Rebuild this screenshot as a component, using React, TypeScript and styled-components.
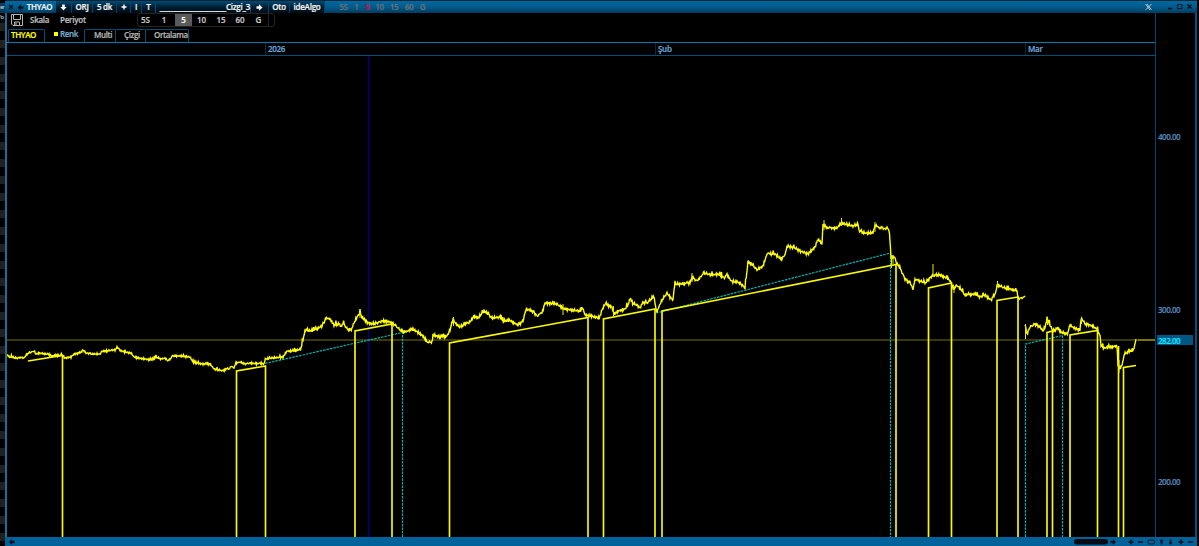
import React from 'react';
import styled, { createGlobalStyle } from 'styled-components';

const Global = createGlobalStyle`
  * { box-sizing: border-box; }
  html, body { margin: 0; background: #000; overflow: hidden; }
  body { font: 600 8px/1 "Open Sans", "Noto Sans", sans-serif; letter-spacing: -.25px; color: #c4c4c4; -webkit-text-stroke: .2px; }
`;
const Desktop = styled.div`display: flex; width: 1199px; height: 546px; background: #000; overflow: hidden;`;
const Behind = styled.aside`
  flex: 0 0 5px; white-space: nowrap; color: #a8b4bc; padding-top: 3px;
  background: repeating-linear-gradient(#000 0 6px, #202020 6px 14px, #000 14px 17px);
`;
const BehindText = styled.div<{ $bg: string }>`
  height: 10px; font-size: 5.6px; font-weight: 600; letter-spacing: -.9px; line-height: 9px; background: ${p => p.$bg};
`;
const Frame = styled.main`
  width: 1192px; display: flex; flex-direction: column; border-top: 1px solid #062638;
`;
const TitleBar = styled.header`
  height: 12px; display: flex; align-items: center; color: #f4f4f4;
  background: linear-gradient(#00699f, #00598a 55%, #003c5e);
`;
const Cell = styled.span<{ $w: number; $dark?: boolean; $tone?: string; $end?: boolean }>`
  width: ${p => p.$w}px; height: 12px; flex: none; display: flex; align-items: center;
  justify-content: ${p => (p.$end ? 'flex-end' : 'center')}; white-space: nowrap;
  color: ${p => p.$tone ?? 'inherit'};
  ${p => p.$dark && 'background: linear-gradient(#004a75, #001c2e 55%, #000c15); border-right: 1px solid #00466f;'}
`;
const Spacer = styled.span<{ $w?: number }>`${p => (p.$w === undefined ? 'flex: 1;' : `flex: 0 0 ${p.$w}px;`)}`;
const Body = styled.div`
  flex: 1; display: flex; min-height: 0; border-left: 2px solid #216c98; border-right: 2px solid #00507c;
`;
const Main = styled.section`width: 1149px; border-right: 1px solid #00466c; display: flex; flex-direction: column;`;
const Toolbar = styled.div`height: 15px; display: flex; align-items: center; padding: 0 0 1px 4px;`;
const MenuItem = styled.span<{ $w: number }>`width: ${p => p.$w}px; color: #bdbdbd;`;
const Periods = styled.div`
  width: 138px; height: 14px; display: flex; align-items: stretch; border: 1px solid #242424; border-radius: 3px;
`;
const Period = styled.span<{ $w: number; $on?: boolean }>`
  flex: 0 0 ${p => p.$w}px; display: flex; align-items: center; justify-content: center; color: ${p => (p.$on ? '#fff' : '#c8c8c8')};
  background: ${p => (p.$on ? '#5b5b5b' : 'transparent')}; letter-spacing: 0;
`;
const PeriodEnd = styled.i`flex: 1; border-left: 1px solid #242424;`;
const Tabs = styled.nav`height: 15px; display: flex; align-items: flex-end; border-bottom: 1px solid #007bb3; padding-left: 1px;`;
const Tab = styled.span<{ $w: number; $tone?: string; $pad: number; $plain?: boolean; $start?: boolean }>`
  width: ${p => p.$w}px; height: 13px; padding-left: ${p => p.$pad}px; display: flex; align-items: center; gap: 2px;
  color: ${p => p.$tone ?? '#b4b4b4'}; padding-bottom: ${p => (p.$plain ? 3 : 2)}px; letter-spacing: -.38px;
  ${p => !p.$plain && 'border-top: 1px solid #004f79; border-right: 1px solid #004f79; border-radius: 0 2px 0 0;'}
  ${p => p.$start && 'border-left: 1px solid #004f79; border-radius: 2px 2px 0 0;'}
`;
const Swatch = styled.i`width: 4px; height: 4px; background: #ff0;`;
const Dates = styled.div`height: 13px; display: flex; border-bottom: 1px solid #004f79; padding-left: 258px;`;
const DateLabel = styled.span<{ $w: number }>`
  width: ${p => p.$w}px; border-left: 1px solid #152633; padding-left: 2px; color: #6aa8da; line-height: 11px; letter-spacing: -.3px;
`;
const Chart = styled.svg`display: block; flex: 1; width: 1148px; min-height: 0;`;
const Axis = styled.aside`flex: 1; display: flex; flex-direction: column; color: #5286b6; padding-top: 118px;`;
const Price = styled.span<{ $gap: number; $on?: boolean }>`
  height: 10px; line-height: 11px; padding-left: 1px; margin: 0 2px ${p => p.$gap}px 1px; letter-spacing: -.48px;
  ${p => p.$on && 'background: #005786; color: #12e6ff;'}
`;
const Footer = styled.footer`height: 9px; background: #00629a; display: flex;`;
const FooterArt = styled.svg`display: block;`;

const Arrow = ({ dir = 'right', color = '#fff' }: { dir?: 'right' | 'left' | 'down'; color?: string }) => (
  <svg width="7" height="7" viewBox="0 0 7 7">
    <path d="M.5 2.200H3V.3L6.500 3.500 3 6.700V4.800H.5Z" fill={color}
      transform={dir === 'left' ? 'rotate(180 3.5 3.5)' : dir === 'down' ? 'rotate(90 3.5 3.5)' : undefined} />
  </svg>
);

type Series = number[];
const first: Series = [
  7,355,9,357,12,357,15,358,20,358,24,358,27,354,32,352,34,351,36,354,40,353,45,354,48,354,52,356,56,355,60,356,62,355,65,358,71,357,74,354,80,353,83,350,86,353,91,354,97,354,100,354,103,351,107,351,112,350,115,350,117,347,119,350,125,352,131,353,134,357,138,358,145,359,152,360,156,357,161,359,165,358,168,361,173,356,180,356,190,357,193,362,197,363,203,364,210,364,214,369,219,370,224,371,227,368,229,370,231,366,234,368,236,363,240,362,245,364,250,363,257,364,260,363,264,364,
  266,359,272,358,283,357,287,351,294,351,301,349,303,340,305,330,310,331,317,329,323,325,326,318,330,319,334,325,339,324,341,326,343,323,348,330,352,329,354,323,357,317,360,313,362,318,366,322,372,324,377,323,382,321,386,321,390,322,395,325,400,330,404,332,408,331,412,329,416,331,423,336,427,342,432,342,433,335,440,337,447,336,450,330,453,319,456,324,460,327,465,324,470,322,474,316,478,318,484,311,487,313,492,318,500,317,504,322,508,320,511,321,518,325,523,321,526,309,532,311,537,316,542,313,545,303,557,304,562,308,565,309,572,310,580,311,583,308,585,315,592,316,599,319,602,310,605,304,612,307,614,314,618,311,625,309,628,305,630,299,632,303,637,305,640,308,642,303,647,303,652,298,654,297,655,303,657,312,662,300,667,293,670,297,673,300,674,290,675,284,680,284,690,283,692,277,697,281,704,273,712,275,718,274,725,278,727,274,731,281,740,283,745,288,748,262,752,264,757,270,763,266,767,254,775,254,781,259,785,255,787,246,795,248,800,251,808,254,815,247,818,239,822,244,823,224,827,228,837,228,841,223,845,224,853,226,858,224,859,230,864,233,873,233,875,225,880,229,882,226,884,229,887,228,889,230,890,240,891,258,894,257,896,262,900,268,905,279,910,283,913,289,915,280,920,281,925,283,930,278,933,275,935,275,940,275,947,278,951,283,954,289,956,285,960,288,965,295,975,294,980,297,985,295,991,300,996,292,997,285,1000,286,1005,288,1010,289,1017,291,1018,298,1021,299,1025,296,
];
const second: Series = [1025,325,1027,334,1030,327,1035,324,1040,327,1043,331,1046,325,1047,318,1050,325,1053,331,1058,328,1062,333,1065,334,1068,333,1070,325,1074,328,1080,330,1081,319,1085,324,1090,325,1097,329,1100,336,1101,345,1104,348,1110,347,1117,346,1118,365,1120,370,1122,365,1124,355,1128,352,1134,349,1136,340];

const trace = (s: Series) => {
  let d = `M${s[0]} ${s[1]}`;
  for (let i = 2; i < s.length; i += 2) {
    const [x0, y0, x1, y1] = [s[i - 2], s[i - 1], s[i], s[i + 1]];
    const steps = Math.max(1, Math.round((x1 - x0) / 0.6));
    const amp = x1 < 300 ? 1 : 1.6;
    for (let k = 1; k <= steps; k++) {
      const t = k / steps;
      const x = x0 + (x1 - x0) * t;
      const n = (Math.sin(x * 17.99) + Math.sin(x * 4.71)) * 0.5;
      const spike = Math.sin(x * 7.3) > 0.985 ? -1.5 : 0;
      d += `L${x.toFixed(1)} ${(y0 + (y1 - y0) * t + n * amp + spike * amp).toFixed(1)}`;
    }
  }
  return d;
};
const spikes = 'M360 318V312M453.500 326V317M563 304V315M692 282V273M824 230V220M841.500 226V218M875 232V222M891.500 255V268M893 264V255M933 276V264M997.500 287V281M1025.500 324V339M1047.500 325V317M1081.500 324V317M954 286V293M1119 360V373M613.500 306V316';

const Plot = () => (
  <Chart viewBox="7 56 1148 481" preserveAspectRatio="none">
    <path d="M368.500 56V537" stroke="#00008c" strokeWidth="1.4" />
    <path d="M7 340H1155" stroke="#4c4c00" strokeWidth="1.6" />
    <path d="M1138 340H1155" stroke="#a29a00" strokeWidth="1.3" />
    <g fill="none" stroke="#00b4b4" strokeWidth="1.2" strokeDasharray="2.5 1">
      <path d="M265 363.500L402.500 332.500V537M656 313L664 311 890.500 253V537M1025.500 537V344L1062.500 335.500V537" />
    </g>
    <g fill="none" stroke="#fafa00" strokeWidth="1.65">
      <path d="M28 361L62.500 355.500V537M236.500 537V371L265.500 366V537M355 537V331L392 324V537M449.500 537V343L588 317.500V537M603.500 537V319L655 309V537M662 537V311L896 264.500V537M928.500 537V288L951.500 283V537M997 537V300.500L1018 297V537M1047 537V332.500L1052.500 331V537M1070 537V335L1097.500 330.500V537M1118.500 346V537M1123.500 537V367.500L1136 365.500" />
    </g>
    <path d={trace(first)} fill="none" stroke="#ff0" strokeWidth="1.4" />
    <path d={trace(second)} fill="none" stroke="#ff0" strokeWidth="1.4" />
    <path d={spikes} stroke="#e8e800" strokeWidth="1" />
  </Chart>
);

export default function App() {
  return (
    <>
      <Global />
      <Desktop>
        <Behind><BehindText $bg="#003c5e">er</BehindText><BehindText $bg="#000">'o</BehindText></Behind>
        <Frame>
          <TitleBar>
            <Cell $w={11}><svg width="6" height="6" viewBox="0 0 6 6"><path d="M1 1L5 5M5 1L1 5" stroke="#001725" strokeWidth="1.3" /></svg></Cell>
            <Cell $w={9}><Arrow dir="left" color="#001725" /></Cell>
            <Cell $w={29}>THYAO</Cell>
            <Spacer $w={2} />
            <Cell $w={16} $dark><Arrow dir="down" /></Cell>
            <Cell $w={21} $dark>ORJ</Cell>
            <Cell $w={24} $dark>5 dk</Cell>
            <Cell $w={14} $dark><svg width="6" height="6"><path d="M3 .500V5.500M.500 3H5.500" stroke="#fff" strokeWidth="1.4" /></svg></Cell>
            <Cell $w={11} $dark>I</Cell>
            <Cell $w={14} $dark>T</Cell>
            <Cell $w={95} $dark $end>_____________________Cizgi_3</Cell>
            <Cell $w={18} $dark><Arrow /></Cell>
            <Cell $w={21} $dark>Oto</Cell>
            <Cell $w={35} $dark>ideAlgo</Cell>
            <Spacer $w={11} />
            {['5S', '1', '5', '10', '15', '60', 'G'].map((v, i) => (
              <Cell key={v} $w={[15, 11, 11, 13, 16, 14, 13][i]} $tone={v === '5' ? '#dc1048' : '#6a7178'}>{v}</Cell>
            ))}
            <Spacer />
            <svg width="50" height="12" viewBox="1144 1 50 12">
              <path d="M1145.500 4L1150 10M1151.500 4L1145.500 10M1147 4L1151.500 10" stroke="#b9c4cb" fill="none" strokeWidth="1" />
              <path d="M1168 8.500H1172M1187.500 4.500L1191.500 8.500M1191.500 4.500L1187.500 8.500" stroke="#00121e" strokeWidth="1.5" />
              <path d="M1177.500 4.500H1182V8.500H1177.500Z" fill="none" stroke="#00121e" />
            </svg>
            <Spacer $w={3} />
          </TitleBar>
          <Body>
            <Main>
              <Toolbar>
                <svg width="12" height="12" viewBox="0 0 12 12" fill="none" stroke="#b5b5b5">
                  <path d="M.500 .500H11.500V11.500H2L.500 10Z" /><path d="M2.500 .500V5.500H9.500V.500M3.500 11V8H8.500V11M5 8.500V11" />
                </svg>
                <Spacer $w={7} />
                <MenuItem $w={30}>Skala</MenuItem>
                <MenuItem $w={77}>Periyot</MenuItem>
                <Periods>
                  {['5S', '1', '5', '10', '15', '60', 'G'].map((v, i) => (
                    <Period key={v} $w={[15, 22, 17, 19, 20, 18, 19][i]} $on={v === '5'}>{v}</Period>
                  ))}
                  <PeriodEnd />
                </Periods>
              </Toolbar>
              <Tabs>
                <Tab $w={37} $pad={2} $tone="#ff0" $start>THYAO</Tab>
                <Tab $w={39} $pad={9} $tone="#79a9cf" $plain><Swatch />Renk</Tab>
                <Tab $w={32} $pad={9} $start>Multi</Tab>
                <Tab $w={30} $pad={8}>Çizgi</Tab>
                <Tab $w={43} $pad={8}>Ortalama</Tab>
              </Tabs>
              <Dates>
                <DateLabel $w={390}>2026</DateLabel><DateLabel $w={370}>Şub</DateLabel><DateLabel $w={80}>Mar</DateLabel>
              </Dates>
              <Plot />
            </Main>
            <Axis>
              <Price $gap={163}>400.00</Price><Price $gap={21}>300.00</Price>
              <Price $gap={131} $on>282.00</Price><Price $gap={0}>200.00</Price>
            </Axis>
          </Body>
          <Footer>
            <FooterArt width="1192" height="9" viewBox="5 537 1192 9">
              <path d="M9 542L12 539V540.700H14.500V543.300H12V545Z" fill="#00121e" />
              <rect x="1074" y="539" width="34" height="5.500" rx="2.700" fill="#000b13" />
              <path d="M1110.500 540.700H1113V539L1116 542 1113 545V543.300H1110.500Z" fill="#00121e" />
              <path d="M1128.500 542H1133.500M1131 539.500V544.500M1138 542H1143M1161.500 539.500V544.500M1160 541H1163M1170.500 539.500V544.500M1169 543H1172M1178.500 542H1183.500M1181 539.500V544.500M1188 542H1193" stroke="#00121e" strokeWidth="1.600" />
              <rect x="1148" y="540" width="6.500" height="4" rx="1.500" fill="none" stroke="#00121e" />
            </FooterArt>
          </Footer>
        </Frame>
      </Desktop>
    </>
  );
}
